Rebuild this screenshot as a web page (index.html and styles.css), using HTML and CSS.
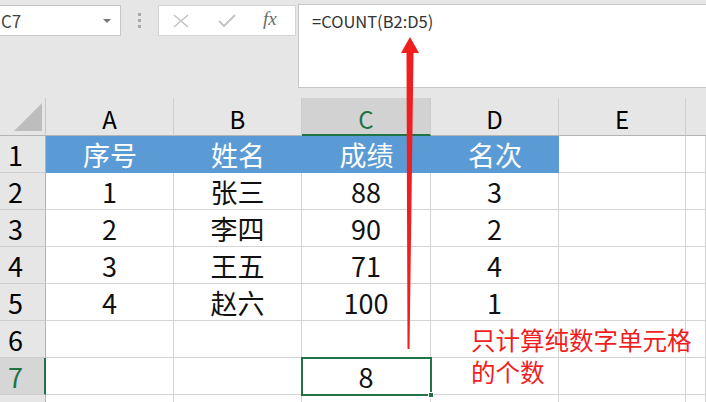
FILE: index.html
```html
<!DOCTYPE html>
<html lang="zh-CN">
<head>
  <meta charset="UTF-8" />
  <title>COUNT 函数示例</title>
  <link rel="stylesheet" href="styles.css">
</head>
<body>
  <div class="app">
    <div class="toolbar">
      <div class="name-box">
        <span>C7</span>
        <span class="caret"></span>
      </div>
      <div class="grip"><i></i><i></i><i></i></div>
      <div class="func-box">
        <svg class="icon" width="16" height="14" viewBox="0 0 16 14"><path d="M1 1 L15 13 M15 1 L1 13" stroke="#c4c4c4" stroke-width="1.6" fill="none"/></svg>
        <svg class="icon" width="18" height="13" viewBox="0 0 18 13"><path d="M1 7 L6 12 L17 1" stroke="#c4c4c4" stroke-width="2" fill="none"/></svg>
        <span class="fx">fx</span>
      </div>
      <div class="formula-bar">=COUNT(B2:D5)</div>
    </div>

    <div class="sheet">
      <div class="corner"><span class="tri"></span></div>
      <div class="col-head">A</div>
      <div class="col-head">B</div>
      <div class="col-head active">C</div>
      <div class="col-head">D</div>
      <div class="col-head">E</div>
      <div class="col-head last"></div>

      <div class="row-head">1</div>
      <div class="cell title">序号</div>
      <div class="cell title">姓名</div>
      <div class="cell title">成绩</div>
      <div class="cell title">名次</div>
      <div class="cell"></div>
      <div class="cell"></div>

      <div class="row-head">2</div>
      <div class="cell">1</div>
      <div class="cell">张三</div>
      <div class="cell">88</div>
      <div class="cell">3</div>
      <div class="cell"></div>
      <div class="cell"></div>

      <div class="row-head">3</div>
      <div class="cell">2</div>
      <div class="cell">李四</div>
      <div class="cell">90</div>
      <div class="cell">2</div>
      <div class="cell"></div>
      <div class="cell"></div>

      <div class="row-head">4</div>
      <div class="cell">3</div>
      <div class="cell">王五</div>
      <div class="cell">71</div>
      <div class="cell">4</div>
      <div class="cell"></div>
      <div class="cell"></div>

      <div class="row-head">5</div>
      <div class="cell">4</div>
      <div class="cell">赵六</div>
      <div class="cell">100</div>
      <div class="cell">1</div>
      <div class="cell"></div>
      <div class="cell"></div>

      <div class="row-head">6</div>
      <div class="cell"></div>
      <div class="cell"></div>
      <div class="cell"></div>
      <div class="cell"></div>
      <div class="cell"></div>
      <div class="cell"></div>

      <div class="row-head active">7</div>
      <div class="cell"></div>
      <div class="cell"></div>
      <div class="cell selected">8</div>
      <div class="cell"></div>
      <div class="cell"></div>
      <div class="cell"></div>

      <div class="row-head"></div>
      <div class="cell"></div>
      <div class="cell"></div>
      <div class="cell"></div>
      <div class="cell"></div>
      <div class="cell"></div>
      <div class="cell"></div>
    </div>

    <svg class="arrow" width="24" height="320" viewBox="0 0 24 320">
      <polygon points="12,2 21,18 15.5,18 11.5,314 9.5,314 8.5,18 3,18" fill="#f01e1e"/>
    </svg>
    <div class="note">只计算纯数字单元格<br>的个数</div>
  </div>
</body>
</html>
```

FILE: styles.css
```css
*, *::before, *::after {
  box-sizing: border-box;
}

body {
  margin: 0;
  background: #e6e6e6;
  font-family: "Noto Sans CJK SC", "Noto Sans", sans-serif;
  color: #111;
}

.app {
  position: relative;
  width: 706px;
  height: 402px;
  overflow: hidden;
  background: #e6e6e6;
}

/* TOOLBAR */
.toolbar {
  display: flex;
  align-items: flex-start;
  height: 98px;
  padding-top: 4px;
}

.name-box {
  width: 121px;
  height: 31px;
  margin-top: 1px;
  background: #fff;
  border: 1px solid #c6c6c6;
  border-left: none;
  display: flex;
  align-items: center;
  justify-content: space-between;
  padding: 0 9px 0 1px;
  font-size: 17px;
  color: #444;
}

.caret {
  width: 0;
  height: 0;
  border-left: 4px solid transparent;
  border-right: 4px solid transparent;
  border-top: 4px solid #777;
}

.grip {
  width: 37px;
  height: 32px;
  display: flex;
  flex-direction: column;
  align-items: center;
  justify-content: center;
  gap: 3px;
}

.grip i {
  width: 3px;
  height: 3px;
  background: #a8a8a8;
}

.func-box {
  width: 138px;
  height: 31px;
  margin-top: 1px;
  background: #fff;
  border: 1px solid #d4d4d4;
  display: flex;
  align-items: center;
  padding-left: 14px;
  gap: 29px;
}

.fx {
  font-family: "Liberation Serif", serif;
  font-style: italic;
  font-size: 19px;
  color: #6c6c6c;
  margin-left: -2px;
  margin-top: -3px;
}

.formula-bar {
  width: 408px;
  height: 84px;
  margin-left: 2px;
  background: #fff;
  border: 1px solid #c6c6c6;
  border-right: none;
  padding: 4px 13px;
  font-size: 16.5px;
  line-height: 24px;
  color: #333;
}

/* SHEET */
.sheet {
  display: grid;
  grid-template-columns: 46px 128px 128px 129px 128px 127px 20px;
  grid-template-rows: 38px repeat(7, 37px) 10px;
}

.corner {
  position: relative;
  border-right: 1px solid #c8c8c8;
  border-bottom: 1px solid #b4b4b4;
}

.tri {
  position: absolute;
  right: 3px;
  bottom: 4px;
  width: 0;
  height: 0;
  border-left: 28px solid transparent;
  border-bottom: 28px solid #bdbdbd;
}

.col-head {
  display: flex;
  align-items: center;
  justify-content: center;
  padding-top: 4px;
  font-size: 24px;
  color: #000;
  border-right: 1px solid #cdcdcd;
  border-bottom: 1px solid #b4b4b4;
}

.col-head.active {
  background: #d2d2d2;
  color: #217346;
  border-bottom: 2px solid #217346;
}

.col-head.last {
  border-right: none;
}

.row-head {
  display: flex;
  align-items: center;
  padding-left: 8px;
  font-size: 27px;
  color: #000;
  border-right: 1px solid #b4b4b4;
  border-bottom: 1px solid #cdcdcd;
}

.row-head.active {
  background: #d6d6d6;
  color: #217346;
  border-right: 2px solid #217346;
}

.cell {
  position: relative;
  display: flex;
  align-items: center;
  justify-content: center;
  background: #fff;
  font-size: 27px;
  border-right: 1px solid #d4d4d4;
  border-bottom: 1px solid #d4d4d4;
}

.cell.title {
  background: #5b9bd5;
  color: #fff;
  border-right: none;
  border-bottom: 1px solid #5b9bd5;
}

.cell.selected {
  outline: 2px solid #217346;
  outline-offset: -1px;
  z-index: 1;
}

.cell.selected::after {
  content: "";
  position: absolute;
  right: -4px;
  bottom: -4px;
  width: 6px;
  height: 6px;
  background: #217346;
  border: 1px solid #fff;
}

/* ANNOTATION */
.arrow {
  position: absolute;
  left: 398px;
  top: 35px;
  z-index: 2;
}

.note {
  position: absolute;
  left: 471px;
  top: 324px;
  font-size: 24.5px;
  line-height: 32px;
  color: #f01e1e;
  z-index: 2;
}
```
